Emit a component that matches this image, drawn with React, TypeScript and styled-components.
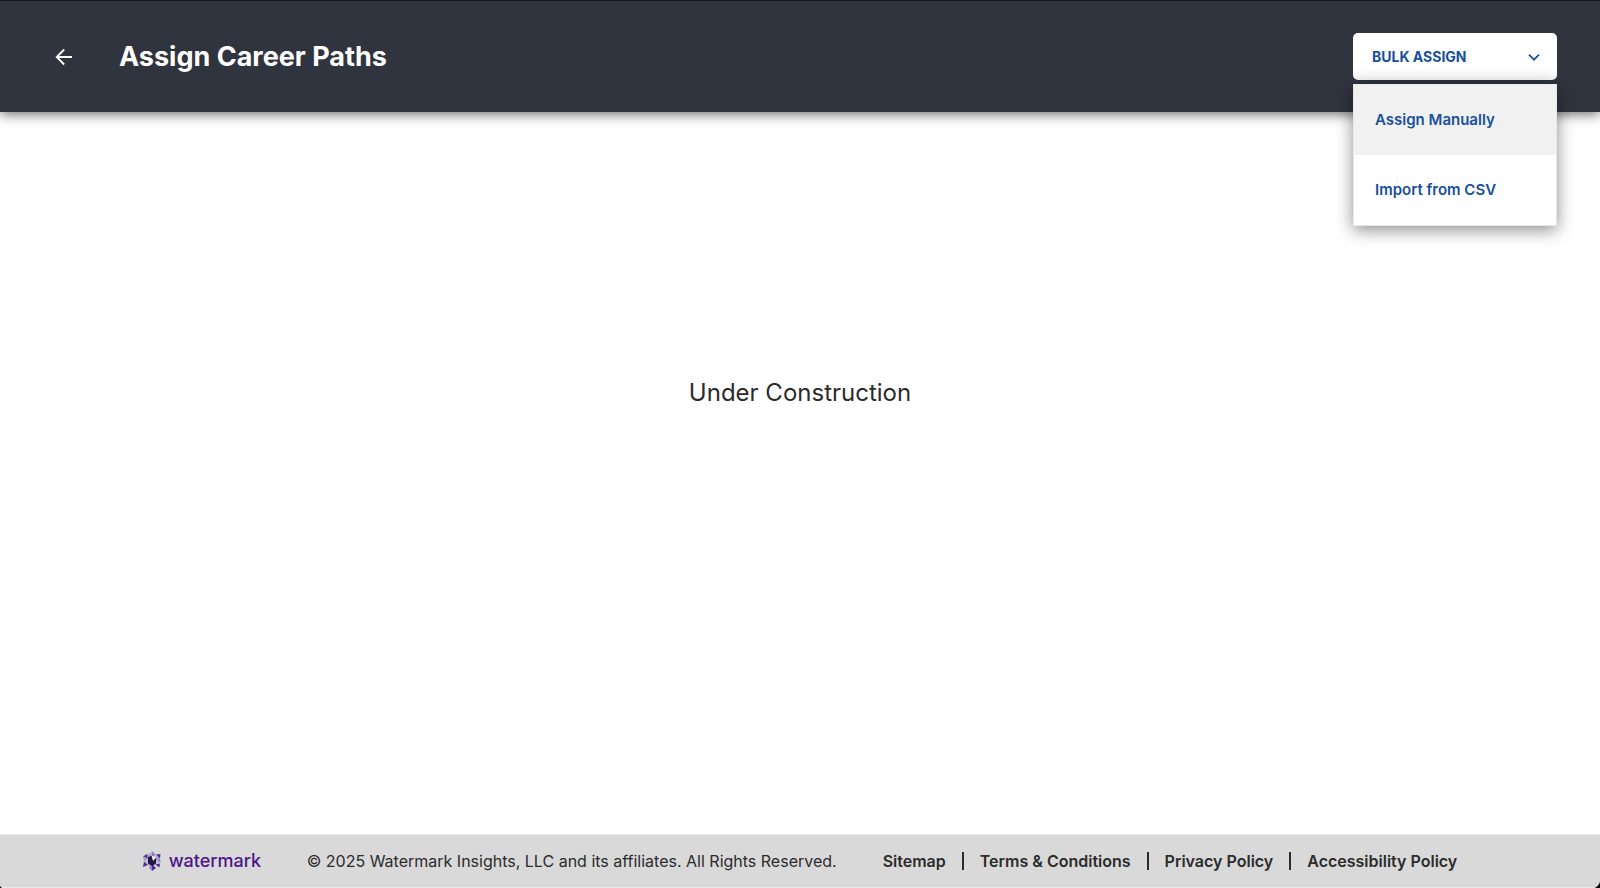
import React, { useState } from "react";
import styled, { createGlobalStyle } from "styled-components";

const GlobalStyle = createGlobalStyle`
  *, *::before, *::after { box-sizing: border-box; }
  html { background: #000; }
  body {
    margin: 0;
    font-family: Inter, "Liberation Sans", sans-serif;
    color: #2b2b2b;
  }
`;

const Page = styled.div`
  display: flex;
  flex-direction: column;
  min-height: 100vh;
  background: #fff;
  border-radius: 0 0 8px 4px;
  overflow: hidden;
`;

const Header = styled.header`
  position: relative;
  display: flex;
  align-items: center;
  height: 112px;
  padding: 0 43px 0 48px;
  border-top: 1px solid #17181c;
  background: #30343f;
  box-shadow: 0 2px 12px rgba(0, 0, 0, 0.6);
`;

const BackButton = styled.button`
  display: flex;
  align-items: center;
  justify-content: center;
  width: 32px;
  height: 32px;
  padding: 0;
  border: 0;
  background: none;
  color: #fff;
  cursor: pointer;
`;

const Title = styled.h1`
  flex: 1;
  margin: 0 0 0 39px;
  color: #fff;
  font-size: 27px;
  font-weight: 700;
  line-height: 36px;
`;

const Dropdown = styled.div`
  position: relative;
  width: 204px;
`;

const DropdownButton = styled.button`
  display: flex;
  align-items: center;
  justify-content: space-between;
  width: 100%;
  height: 47px;
  padding: 0 16px 0 19px;
  border: 0;
  border-radius: 5px;
  background: linear-gradient(#fff 75%, #f6f6f6);
  color: #17509b;
  font-family: inherit;
  font-size: 14px;
  font-weight: 700;
  cursor: pointer;
`;

const Menu = styled.div`
  position: absolute;
  top: calc(100% + 4px);
  left: 0;
  right: 0;
  z-index: 1;
  border: 1px solid #e8e8e8;
  background: #fff;
  box-shadow: 0 4px 16px rgba(0, 0, 0, 0.45);
`;

const MenuItem = styled.button<{ $active?: boolean }>`
  display: block;
  width: 100%;
  height: 70px;
  padding: 0 21px 2px;
  border: 0;
  background: ${(p) => (p.$active ? "#f1f1f1" : "#fff")};
  color: #17509b;
  font-family: inherit;
  font-size: 15px;
  font-weight: 600;
  text-align: left;
  cursor: pointer;
`;

const Main = styled.main`
  flex: 1;
  padding: 265px 24px 24px;
  text-align: center;
`;

const Notice = styled.p`
  margin: 0;
  font-size: 24px;
  line-height: 32px;
`;

const Footer = styled.footer`
  display: flex;
  align-items: center;
  justify-content: center;
  min-height: 54px;
  border-top: 1px solid #eaeaea;
  border-bottom: 1px solid #eaeaea;
  background: #d9d9d9;
  font-size: 16px;
  line-height: 24px;
`;

const Brand = styled.a`
  display: flex;
  align-items: center;
  gap: 8px;
  width: 122px;
  color: #4b158b;
  font-size: 18px;
  font-weight: 500;
  line-height: 20px;
  text-decoration: none;
`;

const Copyright = styled.p`
  margin: 0 46px 0 42px;
`;

const Links = styled.nav`
  display: flex;
  align-items: center;
`;

const FooterLink = styled.a`
  color: inherit;
  font-weight: 600;
  text-decoration: none;

  & + & {
    display: flex;
    align-items: center;
  }

  & + &::before {
    content: "";
    width: 2px;
    height: 18px;
    margin: 0 16px;
    background: #2b2b2b;
  }
`;

const BackArrow = () => (
  <svg width="18" height="18" viewBox="0 0 18 18" fill="none" stroke="currentColor" strokeWidth="1.8" aria-hidden="true">
    <path d="M17 9H2M9.2 1.5 1.7 9l7.5 7.5" />
  </svg>
);

const Chevron = () => (
  <svg width="14" height="14" viewBox="0 0 14 14" fill="none" stroke="currentColor" strokeWidth="1.7" aria-hidden="true">
    <path d="m2 4.7 5 5 5-5" />
  </svg>
);

const LogoMark = () => (
  <svg width="18" height="20" viewBox="0 0 18 20" aria-hidden="true">
    <path d="M9 0 13 4 9 6Z" fill="#8c80bd" />
    <path d="M9 0 5 3.5 9 6Z" fill="#b9b2d8" />
    <path d="M0 5.5 4 3 5 7.5Z" fill="#5a2c94" />
    <path d="M0 5.5 5 7.5 1 10.5Z" fill="#a39bcb" />
    <path d="M4 3 9 6 5 7.5Z" fill="#8f86c0" />
    <path d="M13 3.5 17.5 3 17 7.5Z" fill="#56248f" />
    <path d="M13 3.5 17 7.5 13 9Z" fill="#a79fce" />
    <path d="M17 7.5 17.5 12 13 9Z" fill="#8e83bf" />
    <path d="M1 10.5 5 8 5 14Z" fill="#c2bddd" />
    <path d="M0 16 1 10.5 5 14Z" fill="#5b2a94" />
    <path d="M13 9 17.5 12 13 14Z" fill="#c2bddd" />
    <path d="M12 13.5 17 12.5 16.5 16.5Z" fill="#5a2c94" />
    <path d="M5 13 9 13 7 17Z" fill="#b8b0d7" />
    <path d="M9 13 13 17 9 20Z" fill="#5a2397" />
    <path d="M9 13 6 17 9 20Z" fill="#9186c1" />
    <path d="M5 6.5 9 4.5l4 2.2v5.8L9 15l-4-2.5Z" fill="#211743" />
    <path d="M8.5 4.5 13 6.5 10 10Z" fill="#fff" />
  </svg>
);

const menuItems = ["Assign Manually", "Import from CSV"];
const footerLinks = ["Sitemap", "Terms & Conditions", "Privacy Policy", "Accessibility Policy"];

export default function App() {
  const [open, setOpen] = useState(true);
  const [active, setActive] = useState(0);

  return (
    <>
      <GlobalStyle />
      <Page>
        <Header>
          <BackButton type="button" aria-label="Back">
            <BackArrow />
          </BackButton>
          <Title>Assign Career Paths</Title>
          <Dropdown>
            <DropdownButton type="button" aria-haspopup="menu" aria-expanded={open} onClick={() => setOpen(!open)}>
              BULK ASSIGN
              <Chevron />
            </DropdownButton>
            {open && (
              <Menu role="menu">
                {menuItems.map((label, i) => (
                  <MenuItem key={label} type="button" role="menuitem" $active={i === active} onMouseEnter={() => setActive(i)}>
                    {label}
                  </MenuItem>
                ))}
              </Menu>
            )}
          </Dropdown>
        </Header>
        <Main>
          <Notice>Under Construction</Notice>
        </Main>
        <Footer>
          <Brand href="#">
            <LogoMark />
            watermark
          </Brand>
          <Copyright>© 2025 Watermark Insights, LLC and its affiliates. All Rights Reserved.</Copyright>
          <Links aria-label="Footer">
            {footerLinks.map((label) => (
              <FooterLink key={label} href="#">
                {label}
              </FooterLink>
            ))}
          </Links>
        </Footer>
      </Page>
    </>
  );
}
